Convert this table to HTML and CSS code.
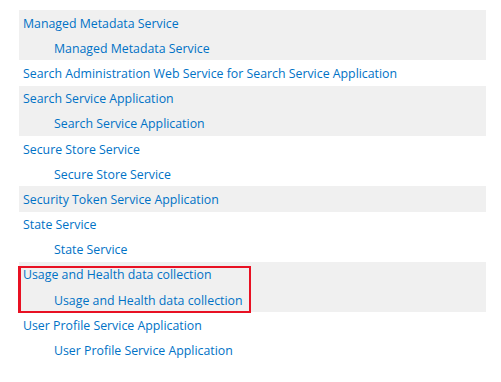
FILE: index.html
```html
<!DOCTYPE html>
<html>
<head>
<meta charset="utf-8">
<link rel="stylesheet" href="styles.css">
</head>
<body>
<div class="list">
  <div class="group alt">
    <div class="row"><span class="link">Managed Metadata Service</span></div>
    <div class="row child"><span class="link">Managed Metadata Service</span></div>
  </div>
  <div class="group">
    <div class="row"><span class="link">Search Administration Web Service for Search Service Application</span></div>
  </div>
  <div class="group alt">
    <div class="row"><span class="link">Search Service Application</span></div>
    <div class="row child"><span class="link">Search Service Application</span></div>
  </div>
  <div class="group">
    <div class="row"><span class="link">Secure Store Service</span></div>
    <div class="row child"><span class="link">Secure Store Service</span></div>
  </div>
  <div class="group alt">
    <div class="row"><span class="link">Security Token Service Application</span></div>
  </div>
  <div class="group">
    <div class="row"><span class="link">State Service</span></div>
    <div class="row child"><span class="link">State Service</span></div>
  </div>
  <div class="group alt highlighted">
    <div class="row"><span class="link">Usage and Health data collection</span></div>
    <div class="row child"><span class="link">Usage and Health data collection</span></div>
    <div class="callout"></div>
  </div>
  <div class="group">
    <div class="row"><span class="link">User Profile Service Application</span></div>
    <div class="row child"><span class="link">User Profile Service Application</span></div>
  </div>
</div>
</body>
</html>
```
FILE: styles.css
```css
html, body {
  margin: 0;
  padding: 0;
  background: #ffffff;
}
body {
  font-family: "Open Sans", "Segoe UI", sans-serif;
  font-size: 12.33px;
  color: #0072c6;
}
.list {
  margin: 10px 0 0 19px;
  width: 467px;
}
.group {
  position: relative;
}
.alt {
  background: #f0f0f0;
}
.row {
  height: 25.2px;
  display: flex;
  align-items: center;
  padding-left: 4px;
  padding-top: 1px;
  box-sizing: border-box;
  white-space: nowrap;
}
.row.child {
  padding-left: 35px;
}
.link {
  color: #0072c6;
}
.callout {
  position: absolute;
  left: -1px;
  top: 4px;
  width: 228px;
  height: 43px;
  border: 2px solid #e81123;
  border-left-width: 3px;
}
```
